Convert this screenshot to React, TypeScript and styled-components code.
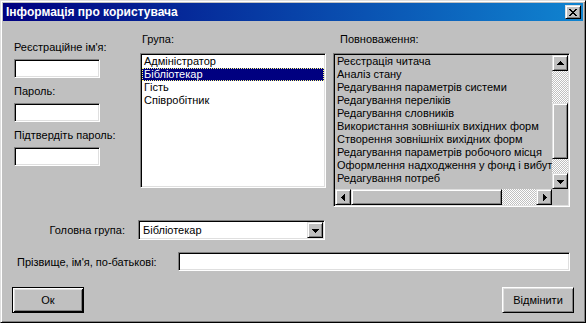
import React from 'react';
import styled, { createGlobalStyle, css } from 'styled-components';

const GlobalStyle = createGlobalStyle`
  html, body {
    margin: 0;
    padding: 0;
    background: #c0c0c0;
    overflow: hidden;
  }
  body {
    font-family: "Liberation Sans", Arial, sans-serif;
    font-size: 11px;
    color: #000;
  }
`;

const raised = css`
  border: 1px solid;
  border-color: #dfdfdf #000 #000 #dfdfdf;
  box-shadow: inset 1px 1px #fff, inset -1px -1px #808080;
`;

const sunken = css`
  border: 1px solid;
  border-color: #808080 #fff #fff #808080;
  box-shadow: inset 1px 1px #000, inset -1px -1px #dfdfdf;
`;

const checker = css`
  background: repeating-conic-gradient(#fff 0 25%, #c0c0c0 0 50%) 0 0 / 2px 2px;
`;

const Window = styled.div`
  box-sizing: border-box;
  width: 586px;
  height: 323px;
  padding: 2px;
  background: #c0c0c0;
  display: flex;
  flex-direction: column;
  ${raised}
`;

const TitleBar = styled.div`
  height: 18px;
  flex: none;
  display: flex;
  align-items: center;
  justify-content: space-between;
  padding: 0 2px 0 3px;
  background: linear-gradient(to right, #000080, #1084d0);
  color: #fff;
  font-weight: bold;
  font-size: 12px;
`;

const CloseButton = styled.div`
  box-sizing: border-box;
  width: 16px;
  height: 14px;
  background: #c0c0c0;
  display: flex;
  align-items: center;
  justify-content: center;
  ${raised}
`;

const Content = styled.div`
  display: flex;
  flex-direction: column;
  padding: 12px 13px 0 11px;
`;

const Top = styled.div`
  display: flex;
  align-items: flex-start;
`;

const LeftCol = styled.div`
  width: 86px;
  padding-top: 8px;
  display: flex;
  flex-direction: column;
  gap: 7px;
`;

const Field = styled.div`
  display: flex;
  flex-direction: column;
  gap: 5px;
`;

const Label = styled.div<{ $indent?: number }>`
  height: 13px;
  line-height: 13px;
  white-space: nowrap;
  padding-left: ${(p) => p.$indent ?? 0}px;
`;

const TextBox = styled.div<{ $w?: number }>`
  box-sizing: border-box;
  height: 19px;
  width: ${(p) => (p.$w ? `${p.$w}px` : 'auto')};
  flex: ${(p) => (p.$w ? 'none' : '1')};
  background: #fff;
  ${sunken}
`;

const GroupCol = styled.div`
  margin-left: 40px;
  width: 186px;
  display: flex;
  flex-direction: column;
  gap: 7px;
`;

const PermsCol = styled.div`
  margin-left: 7px;
  width: 237px;
  display: flex;
  flex-direction: column;
  gap: 7px;
`;

const ListBox = styled.div`
  box-sizing: border-box;
  height: 135px;
  padding: 1px;
  background: #fff;
  ${sunken}
`;

const ListItem = styled.div<{ $selected?: boolean }>`
  height: 13px;
  line-height: 13px;
  padding-left: 2px;
  white-space: nowrap;
  ${(p) =>
    p.$selected &&
    css`
      background: #000080;
      color: #fff;
      outline: 1px dotted #ffff80;
      outline-offset: -1px;
    `}
`;

const PermsBox = styled.div`
  box-sizing: border-box;
  height: 154px;
  padding: 1px;
  background: #c0c0c0;
  display: grid;
  grid-template-columns: 1fr 16px;
  grid-template-rows: 1fr 16px;
  ${sunken}
`;

const PermsItems = styled.div`
  overflow: hidden;
`;

const VScroll = styled.div`
  display: flex;
  flex-direction: column;
`;

const HScroll = styled.div`
  display: flex;
`;

const Track = styled.div<{ $vertical?: boolean; $offset: number }>`
  flex: 1;
  display: flex;
  flex-direction: ${(p) => (p.$vertical ? 'column' : 'row')};
  padding-${(p) => (p.$vertical ? 'top' : 'left')}: ${(p) => p.$offset}px;
  ${checker}
`;

const Thumb = styled.div<{ $vertical?: boolean; $size: number }>`
  box-sizing: border-box;
  flex: none;
  background: #c0c0c0;
  ${(p) => (p.$vertical ? `height: ${p.$size}px;` : `width: ${p.$size}px;`)}
  ${raised}
`;

const ScrollBtn = styled.div`
  box-sizing: border-box;
  width: 16px;
  height: 16px;
  flex: none;
  background: #c0c0c0;
  display: flex;
  align-items: center;
  justify-content: center;
  ${raised}
`;

const Corner = styled.div`
  background: #c0c0c0;
`;

const Row = styled.div<{ $top: number }>`
  display: flex;
  align-items: center;
  margin-top: ${(p) => p.$top}px;
`;

const RowLabel = styled.div<{ $w: number; $right?: boolean; $indent?: number }>`
  width: ${(p) => p.$w}px;
  flex: none;
  box-sizing: border-box;
  padding-left: ${(p) => p.$indent ?? 0}px;
  text-align: ${(p) => (p.$right ? 'right' : 'left')};
  white-space: nowrap;
`;

const Combo = styled.div`
  box-sizing: border-box;
  margin-left: 13px;
  width: 187px;
  height: 20px;
  padding: 1px 1px 1px 4px;
  background: #fff;
  display: flex;
  align-items: center;
  justify-content: space-between;
  ${sunken}
`;

const ButtonRow = styled.div`
  display: flex;
  justify-content: space-between;
  margin: 16px -4px 0 -2px;
`;

const Button = styled.div<{ $default?: boolean }>`
  box-sizing: border-box;
  width: 72px;
  height: 26px;
  display: flex;
  align-items: center;
  justify-content: center;
  background: #c0c0c0;
  ${(p) =>
    p.$default
      ? css`
          border: 1px solid #000;
          box-shadow: inset 1px 1px #fff, inset -1px -1px #000, inset 2px 2px #dfdfdf,
            inset -2px -2px #808080;
        `
      : css`
          border: 1px solid;
          border-color: #fff #000 #000 #fff;
          box-shadow: inset 1px 1px #dfdfdf, inset -1px -1px #808080;
        `}
`;

const ArrowSvg = styled.svg<{ $rot: number }>`
  display: block;
  transform: rotate(${(p) => p.$rot}deg);
`;

type Dir = 'up' | 'down' | 'left' | 'right';
const rotation: Record<Dir, number> = { up: 0, right: 90, down: 180, left: 270 };

const Arrow = ({ dir }: { dir: Dir }) => (
  <ArrowSvg $rot={rotation[dir]} width="7" height="7" viewBox="0 0 7 7" shapeRendering="crispEdges">
    <rect x="3" y="1" width="1" height="1" fill="#000" />
    <rect x="2" y="2" width="3" height="1" fill="#000" />
    <rect x="1" y="3" width="5" height="1" fill="#000" />
    <rect x="0" y="4" width="7" height="1" fill="#000" />
  </ArrowSvg>
);

const xPattern = ['xx....xx', '.xx..xx.', '..xxxx..', '...xx...', '..xxxx..', '.xx..xx.', 'xx....xx'];

const CloseGlyph = () => (
  <svg width="8" height="7" viewBox="0 0 8 7" shapeRendering="crispEdges">
    {xPattern.flatMap((line, y) =>
      line.split('').map((c, x) =>
        c === 'x' ? <rect key={`${x}-${y}`} x={x} y={y} width="1" height="1" fill="#000" /> : null
      )
    )}
  </svg>
);

const groups = ['Адміністратор', 'Бібліотекар', 'Гість', 'Співробітник'];

const permissions = [
  'Реєстрація читача',
  'Аналіз стану',
  'Редагування параметрів системи',
  'Редагування переліків',
  'Редагування словників',
  'Використання зовнішніх вихідних форм',
  'Створення зовнішніх вихідних форм',
  'Редагування параметрів робочого місця',
  'Оформлення надходження у фонд і вибутт',
  'Редагування потреб',
];

const App = () => {
  return (
    <>
      <GlobalStyle />
      <Window>
        <TitleBar>
          <span>Інформація про користувача</span>
          <CloseButton>
            <CloseGlyph />
          </CloseButton>
        </TitleBar>
        <Content>
          <Top>
            <LeftCol>
              <Field>
                <Label>Реєстраційне ім'я:</Label>
                <TextBox $w={86} />
              </Field>
              <Field>
                <Label>Пароль:</Label>
                <TextBox $w={86} />
              </Field>
              <Field>
                <Label>Підтвердіть пароль:</Label>
                <TextBox $w={86} />
              </Field>
            </LeftCol>
            <GroupCol>
              <Label $indent={2}>Група:</Label>
              <ListBox>
                {groups.map((g) => (
                  <ListItem key={g} $selected={g === 'Бібліотекар'}>
                    {g}
                  </ListItem>
                ))}
              </ListBox>
            </GroupCol>
            <PermsCol>
              <Label $indent={7}>Повноваження:</Label>
              <PermsBox>
                <PermsItems>
                  {permissions.map((p) => (
                    <ListItem key={p}>{p}</ListItem>
                  ))}
                </PermsItems>
                <VScroll>
                  <ScrollBtn>
                    <Arrow dir="up" />
                  </ScrollBtn>
                  <Track $vertical $offset={32}>
                    <Thumb $vertical $size={56} />
                  </Track>
                  <ScrollBtn>
                    <Arrow dir="down" />
                  </ScrollBtn>
                </VScroll>
                <HScroll>
                  <ScrollBtn>
                    <Arrow dir="left" />
                  </ScrollBtn>
                  <Track $offset={0}>
                    <Thumb $size={151} />
                  </Track>
                  <ScrollBtn>
                    <Arrow dir="right" />
                  </ScrollBtn>
                </HScroll>
                <Corner />
              </PermsBox>
            </PermsCol>
          </Top>
          <Row $top={13}>
            <RowLabel $w={111} $right>
              Головна група:
            </RowLabel>
            <Combo>
              <span>Бібліотекар</span>
              <ScrollBtn>
                <Arrow dir="down" />
              </ScrollBtn>
            </Combo>
          </Row>
          <Row $top={12}>
            <RowLabel $w={164} $indent={3}>
              Прізвище, ім'я, по-батькові:
            </RowLabel>
            <TextBox />
          </Row>
          <ButtonRow>
            <Button $default>Ок</Button>
            <Button>Відмінити</Button>
          </ButtonRow>
        </Content>
      </Window>
    </>
  );
};

export default App;
